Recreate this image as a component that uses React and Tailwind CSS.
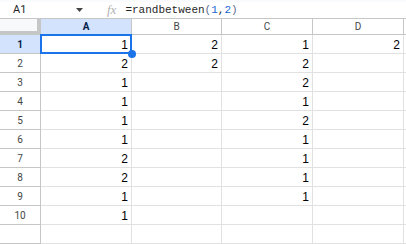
import React from "react";

const data = [
  ["1", "2", "1", "2"],
  ["2", "2", "2", ""],
  ["1", "", "2", ""],
  ["1", "", "1", ""],
  ["1", "", "2", ""],
  ["1", "", "1", ""],
  ["2", "", "1", ""],
  ["2", "", "1", ""],
  ["1", "", "1", ""],
  ["1", "", "", ""],
];

const cols = ["A", "B", "C", "D"];
const gridCols = "grid grid-cols-[41px_91px_90px_91px_91px_1fr]";

const App = () => {
  return (
    <div className="w-[406px] h-[244px] overflow-hidden bg-white flex flex-col">
      <div className="h-[3px] bg-[#f9fbfd]" />

      {/* formula bar */}
      <div className="h-[26px] flex items-center text-[#1f1f1f]">
        <div className="w-[100px] flex items-center pl-[13px] pr-[17px] justify-between">
          <span className="text-[11px] font-['Roboto',sans-serif]">A1</span>
          <svg width="7" height="4" viewBox="0 0 7 4" className="mt-[1px]">
            <path d="M0 0h7L3.5 4z" fill="#444746" />
          </svg>
        </div>
        <span className="ml-[7px] text-[13px] italic text-[#b0b3b2] font-['Liberation_Serif',serif] leading-none">
          fx
        </span>
        <span className="ml-[9px] text-[11px] font-['Liberation_Mono',monospace] text-[#1f1f1f]">
          =randbetween<span className="text-[#5b6b8c]">(</span>
          <span className="text-[#1967d2]">1</span>,
          <span className="text-[#1967d2]">2</span>
          <span className="text-[#5b6b8c]">)</span>
        </span>
      </div>

      {/* column headers */}
      <div className={`${gridCols} h-[22px] border-t border-[#c4c7c5] font-['Roboto',sans-serif] text-[10px]`}>
        <div className="bg-[#f8f9fa] border-r-[4px] border-b-[4px] border-[#c4c7c5]" />
        {cols.map((c, i) => (
          <div
            key={c}
            className={`flex items-center justify-center border-r border-b border-[#c4c7c5] ${
              i === 0 ? "bg-[#d3e3fd] text-[#041e49] font-bold" : "bg-white text-[#444746]"
            }`}
          >
            {c}
          </div>
        ))}
        <div className="border-b border-[#c4c7c5]" />
      </div>

      {/* rows */}
      {[...data, ["", "", "", ""]].map((row, r) => (
        <div key={r} className={`${gridCols} h-[19px] shrink-0`}>
          <div
            className={`flex items-center justify-center border-r border-b border-[#c4c7c5] font-['Roboto',sans-serif] text-[10px] ${
              r === 0 ? "bg-[#d3e3fd] text-[#041e49] font-bold" : "bg-white text-[#444746]"
            }`}
          >
            {r < 10 ? r + 1 : ""}
          </div>
          {row.map((v, c) => (
            <div
              key={c}
              className="relative flex items-end justify-end pr-[3px] pb-[2px] border-r border-b border-[#e1e1e1] text-[12px] leading-none text-black font-['Liberation_Sans',Arial,sans-serif]"
            >
              {v}
              {r === 0 && c === 0 && (
                <>
                  <div className="absolute -left-px -top-px right-[-1px] bottom-[-1px] border-2 border-[#1a73e8]" />
                  <div className="absolute right-[-5px] bottom-[-5px] w-[8px] h-[8px] rounded-full bg-[#1a73e8] z-10" />
                </>
              )}
            </div>
          ))}
          <div className="border-b border-[#e1e1e1]" />
        </div>
      ))}
    </div>
  );
};

export default App;
